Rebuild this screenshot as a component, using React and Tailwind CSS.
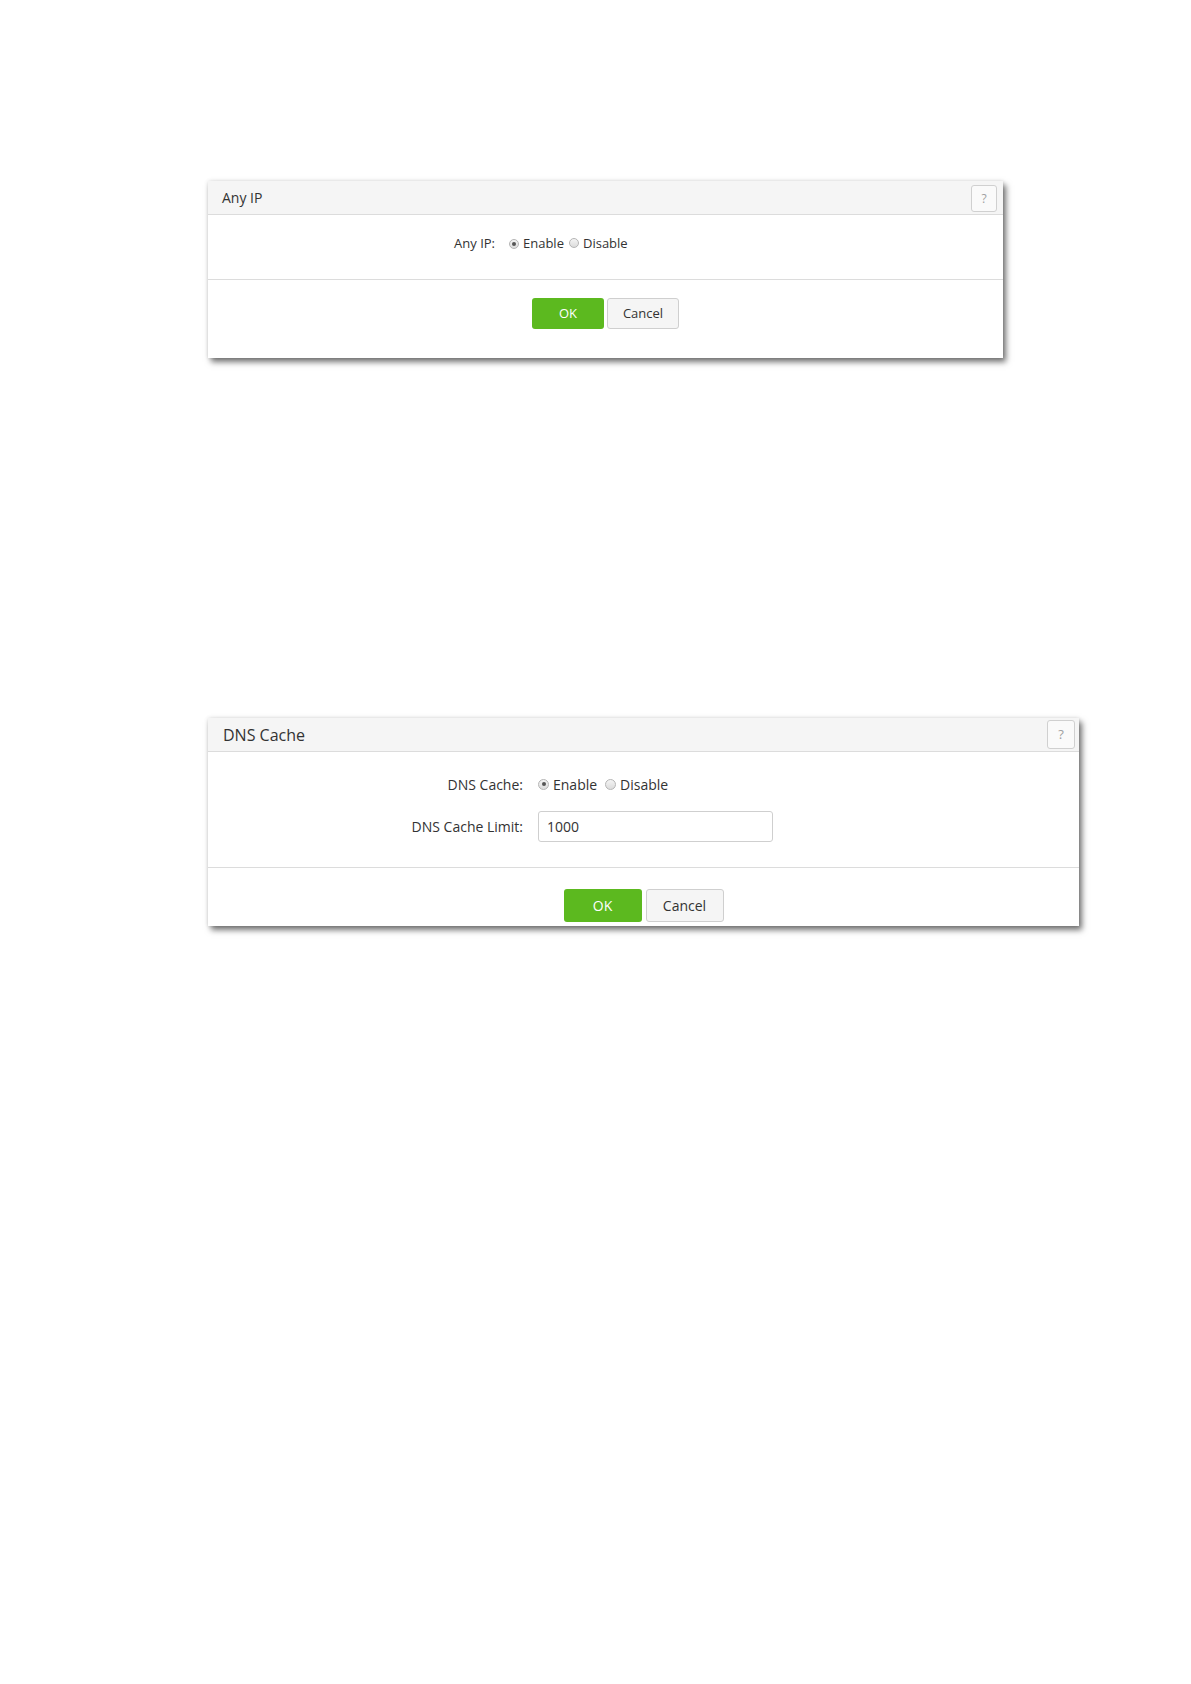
import React from "react";

const font = { fontFamily: '"Open Sans", "Noto Sans", sans-serif' };

const Radio = ({ checked, size }) => (
  <span
    className={`inline-flex items-center justify-center rounded-full border border-[#b5b5b5] bg-gradient-to-b from-[#f4f4f4] to-[#dcdcdc] ${size}`}
  >
    {checked && <span className="w-[4px] h-[4px] rounded-full bg-[#555]" />}
  </span>
);

const HelpButton = ({ cls }) => (
  <button
    className={`flex items-center justify-center rounded-[3px] border border-[#d0d0d0] bg-[#fafafa] text-[#a0a0a0] ${cls}`}
  >
    ?
  </button>
);

const Panel = ({ children, className }) => (
  <div
    className={`bg-white shadow-[3px_4px_6px_rgba(0,0,0,0.55),0_0_4px_rgba(0,0,0,0.12)] ${className}`}
  >
    {children}
  </div>
);

const AnyIpPanel = () => (
  <Panel className="w-[795px]">
    <div className="h-[34px] bg-[#f5f5f5] border-b border-[#dcdcdc] flex items-center justify-between pl-[14px] pr-[6px]">
      <span className="text-[14px] text-[#333]">Any IP</span>
      <HelpButton cls="w-[26px] h-[27px] mt-[2px] text-[12px]" />
    </div>
    <div className="h-[65px] border-b border-[#dcdcdc] flex items-center pb-[6px] text-[13px] text-[#333]">
      <div className="w-[287px] text-right">Any IP:</div>
      <div className="flex items-center ml-[14px]">
        <Radio checked size="w-[10px] h-[10px]" />
        <span className="ml-[4px]">Enable</span>
        <span className="ml-[5px]">
          <Radio size="w-[10px] h-[10px]" />
        </span>
        <span className="ml-[4px]">Disable</span>
      </div>
    </div>
    <div className="h-[78px] flex justify-center gap-[3px] pt-[18px] text-[13px]">
      <button className="w-[72px] h-[31px] rounded-[3px] bg-[#5cb91f] text-white">
        OK
      </button>
      <button className="w-[72px] h-[31px] rounded-[3px] border border-[#cfcfcf] bg-[#f5f5f5] text-[#333]">
        Cancel
      </button>
    </div>
  </Panel>
);

const DnsCachePanel = () => (
  <Panel className="w-[871px]">
    <div className="h-[34px] bg-[#f5f5f5] border-b border-[#dcdcdc] flex items-center justify-between pl-[15px] pr-[4px]">
      <span className="text-[16px] text-[#333]">DNS Cache</span>
      <HelpButton cls="w-[28px] h-[29px] text-[13px]" />
    </div>
    <div className="h-[116px] border-b border-[#dcdcdc] pt-[21px] text-[14px] text-[#333]">
      <div className="flex items-center h-[22px]">
        <div className="w-[315px] text-right">DNS Cache:</div>
        <div className="flex items-center ml-[15px]">
          <Radio checked size="w-[11px] h-[11px]" />
          <span className="ml-[4px]">Enable</span>
          <span className="ml-[8px]">
            <Radio size="w-[11px] h-[11px]" />
          </span>
          <span className="ml-[4px]">Disable</span>
        </div>
      </div>
      <div className="flex items-center mt-[16px]">
        <div className="w-[315px] text-right">DNS Cache Limit:</div>
        <input
          defaultValue="1000"
          className="ml-[15px] w-[235px] h-[31px] rounded-[3px] border border-[#cfcfcf] pl-[8px] text-[14px] text-[#333] outline-none"
          style={font}
        />
      </div>
    </div>
    <div className="h-[58px] flex justify-center gap-[4px] pt-[21px] text-[14px]">
      <button className="w-[78px] h-[33px] rounded-[3px] bg-[#5cb91f] text-white">
        OK
      </button>
      <button className="w-[78px] h-[33px] rounded-[3px] border border-[#cfcfcf] bg-[#f5f5f5] text-[#333]">
        Cancel
      </button>
    </div>
  </Panel>
);

export default function App() {
  return (
    <div className="min-h-[1684px] bg-white pl-[208px] pt-[181px]" style={font}>
      <AnyIpPanel />
      <div className="mt-[360px]">
        <DnsCachePanel />
      </div>
    </div>
  );
}
